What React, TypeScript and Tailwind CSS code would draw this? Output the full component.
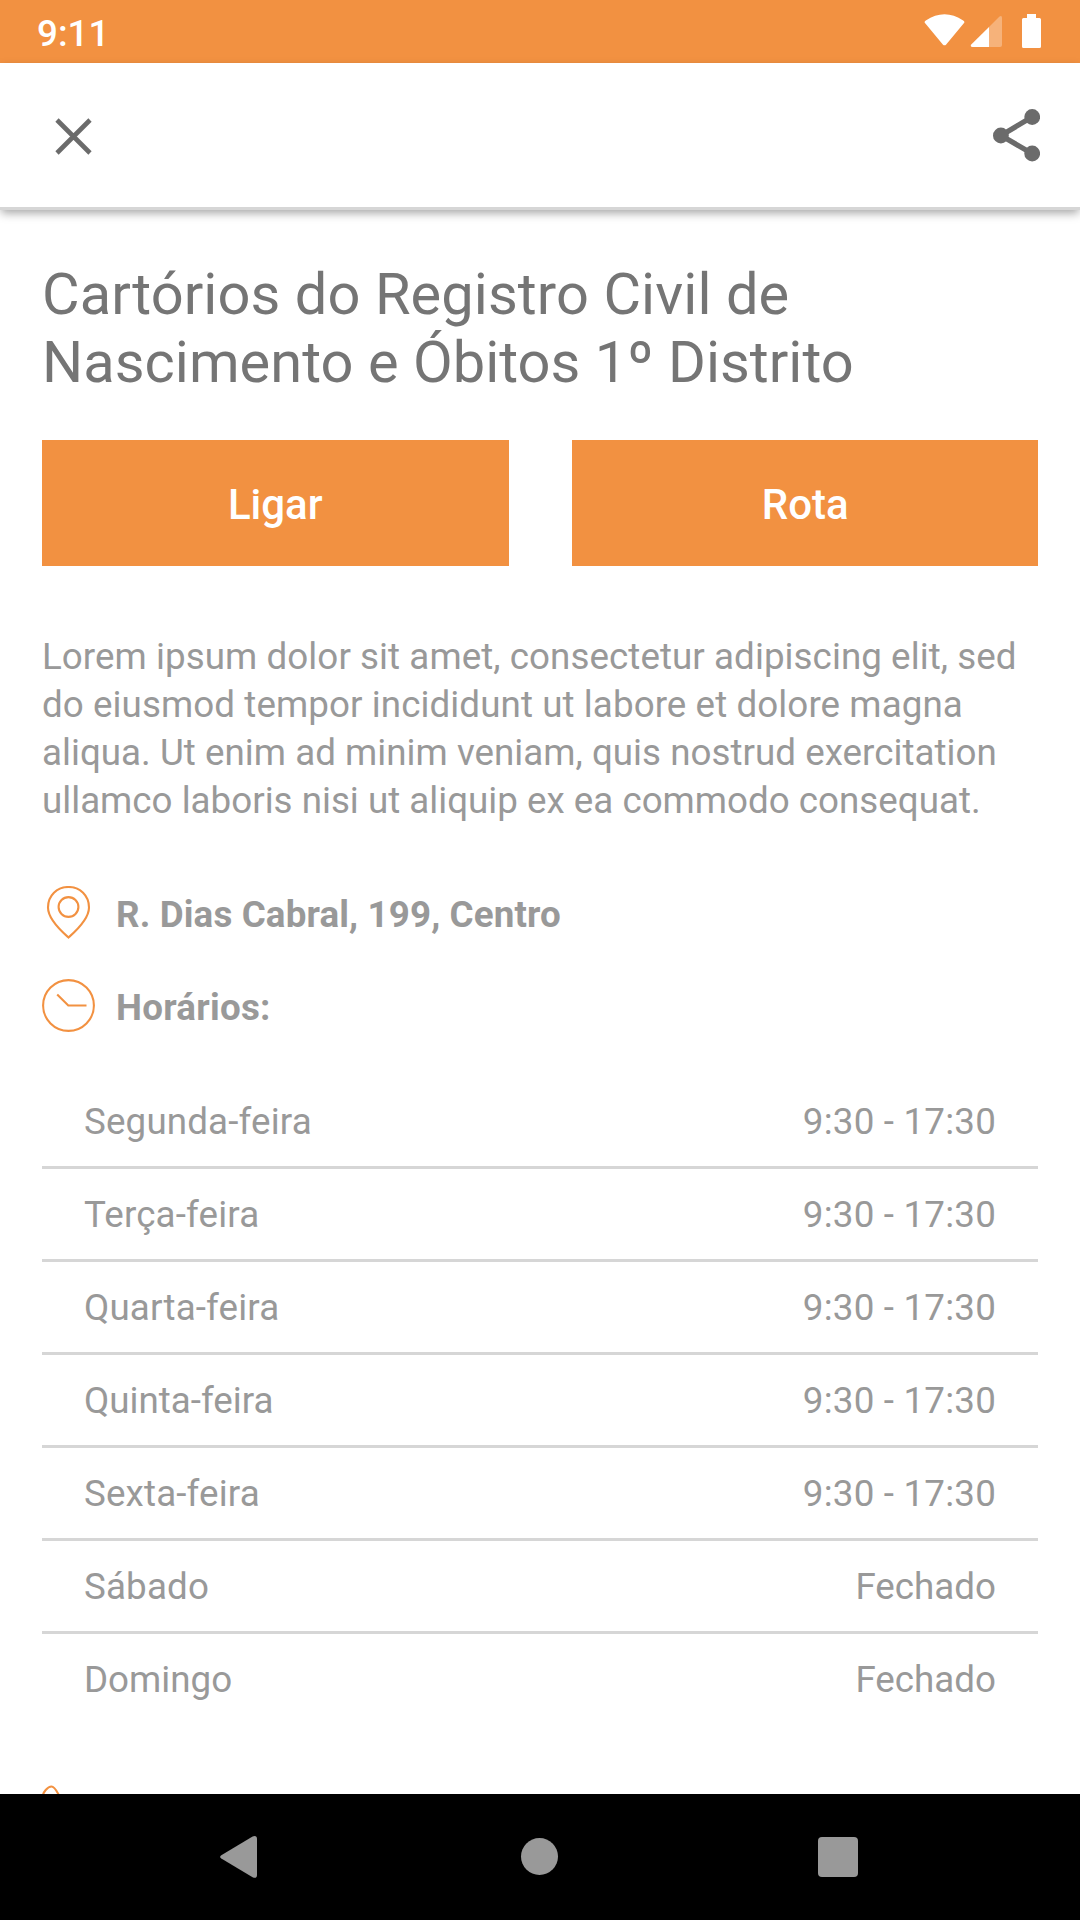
const hours = [
  ['Segunda-feira', '9:30 - 17:30'],
  ['Terça-feira', '9:30 - 17:30'],
  ['Quarta-feira', '9:30 - 17:30'],
  ['Quinta-feira', '9:30 - 17:30'],
  ['Sexta-feira', '9:30 - 17:30'],
  ['Sábado', 'Fechado'],
  ['Domingo', 'Fechado'],
];

function StatusBar() {
  return (
    <header className="flex h-[63px] shrink-0 items-center justify-between bg-[#f29141] pr-[38px] pl-[37px] text-white">
      <span className="pt-1 text-[36.75px] leading-[43px] font-medium">9:11</span>
      <svg className="h-[63px] w-[120px]" viewBox="922 0 120 63" fill="currentColor">
        <path d="M925.4 23.6Q923.6 21.8 925.8 20.4Q944.5 8 963.2 20.4Q965.4 21.8 963.6 23.6L946.2 44.4Q944.5 46.2 942.8 44.4Z" />
        <path opacity=".3" d="M989 27L999.5 16.5Q1002 15 1002 18V45Q1002 47 1000 47H989Z" />
        <path d="M989 27V47H972.5Q969.5 46.6 971.5 44.3Z" />
        <path d="M1027 14H1036V18H1039.5Q1041 18 1041 19.5V46.5Q1041 48 1039.5 48H1023.5Q1022 48 1022 46.5V19.5Q1022 18 1023.5 18H1027Z" />
      </svg>
    </header>
  );
}

function Toolbar() {
  return (
    <div className="relative flex h-[147px] shrink-0 items-start justify-between border-b-[3px] border-[#d6d6d6] bg-white pt-[45px] pr-[40px] pl-[55px] text-[#6b6b6b] shadow-[0_4px_9px_-1px_rgba(0,0,0,0.36)]">
      <button aria-label="Fechar" className="pt-[10px]">
        <svg className="size-[37px]" viewBox="0 0 37 37" fill="none" stroke="currentColor" strokeWidth="4.6">
          <path d="M2 2L35 35M35 2L2 35" />
        </svg>
      </button>
      <button aria-label="Compartilhar">
        <svg className="h-[54px] w-[47px]" viewBox="0 0 47 54" fill="currentColor">
          <path d="M39 9L8 27.5L39 45.500" fill="none" stroke="currentColor" strokeWidth="5.2" />
          <circle cx="39.200" cy="9" r="7.900" />
          <circle cx="7.900" cy="27.500" r="7.900" />
          <circle cx="39.200" cy="45.500" r="7.900" />
        </svg>
      </button>
    </div>
  );
}

export default function App() {
  return (
    <div className="flex h-[1920px] w-[1080px] flex-col overflow-hidden bg-white font-['Roboto',sans-serif] text-[36.75px] leading-[48px] text-[#999999]">
      <StatusBar />
      <Toolbar />
      <main className="flex min-h-0 flex-1 flex-col overflow-hidden px-[42px] pt-[50px]">
        <h1 className="shrink-0 text-[57.75px] leading-[68px] text-[#757575]">
          <span className="tracking-[0.09px]">Cartórios do Registro Civil de</span>
          <br />
          <span className="tracking-[0.04px]">Nascimento e Óbitos 1º Distrito</span>
        </h1>
        <div className="mt-[44px] grid shrink-0 grid-cols-2 gap-[63px] text-[42px] font-medium text-white">
          <button className="h-[126px] bg-[#f29141] pt-[3px]">Ligar</button>
          <button className="h-[126px] bg-[#f29141] pt-[3px] pl-px">Rota</button>
        </div>
        <p className="mt-[67px] shrink-0">
          <span className="tracking-[0.06px]">Lorem ipsum dolor sit amet, consectetur adipiscing elit, sed</span>
          <br />
          <span className="tracking-[0.08px]">do eiusmod tempor incididunt ut labore et dolore magna</span>
          <br />
          <span className="tracking-[0.02px]">aliqua. Ut enim ad minim veniam, quis nostrud exercitation</span>
          <br />
          ullamco laboris nisi ut aliquip ex ea commodo consequat.
        </p>
        <div className="mt-[61px] flex h-[53px] shrink-0 items-center gap-[21px] font-bold">
          <svg className="size-[53px]" viewBox="0 0 53 53" fill="none" stroke="#f29141" strokeWidth="2.1">
            <path d="M26.500 51.500C22 47.500 6 34 6 21.500C6 9.500 15 1 26.500 1S47 9.500 47 21.500C47 34 31 47.500 26.500 51.500Z" />
            <circle cx="26.500" cy="21" r="9.900" />
          </svg>
          <span className="pt-[5px] tracking-[0.13px]">R. Dias Cabral, 199, Centro</span>
        </div>
        <div className="mt-[40px] flex h-[53px] shrink-0 items-center gap-[21px] font-bold">
          <svg className="size-[53px]" viewBox="0 0 53 53" fill="none" stroke="#f29141" strokeWidth="2.1">
            <circle cx="26.500" cy="26.500" r="25.400" />
            <path d="M15.200 15.500L26.300 26.500H44.500" />
          </svg>
          <span className="pt-[5px] tracking-[0.25px]">Horários:</span>
        </div>
        <ul className="mt-[44px] shrink-0">
          {hours.map(([day, time]) => (
            <li key={day} className="flex h-[93px] items-center justify-between border-b-[3px] border-[#d6d6d6] px-[42px] pt-[2px] last:border-transparent">
              <span className={day === 'Domingo' || day === 'Quinta-feira' ? '' : 'tracking-[0.15px]'}>{day}</span>
              <span className={time === 'Fechado' ? '' : 'tracking-[0.2px]'}>{time}</span>
            </li>
          ))}
        </ul>
        <svg className="mt-[58px] size-[53px] shrink-0" viewBox="0 0 53 53" fill="none" stroke="#f29141" strokeWidth="2.1">
          <path d="M0.500 13C0.500 7 6 1.500 9.500 1.500C13 1.500 15 7 18 12C20 16 15 18 14 22C18 31 25 37 32 40C36 38 37 34 41 36C47 39 52 42 50 45C46 51 42 53 37 51C18 45 1 26 0.500 13Z" />
        </svg>
      </main>
      <nav className="flex h-[126px] shrink-0 items-center bg-black pl-[219px] text-[#999999]">
        <svg className="h-[44px] w-[39px]" viewBox="0 0 39 44" fill="currentColor">
          <path d="M2.300 20.200L33.600 1.400Q38 0 38 4V40Q38 44 33.600 42.300L2.300 23.500Q0 21.900 2.300 20.200Z" />
        </svg>
        <span className="mb-px ml-[263px] size-[37px] rounded-full bg-[#999999]" />
        <span className="ml-[260px] size-[40px] rounded-[4px] bg-[#999999]" />
      </nav>
    </div>
  );
}
